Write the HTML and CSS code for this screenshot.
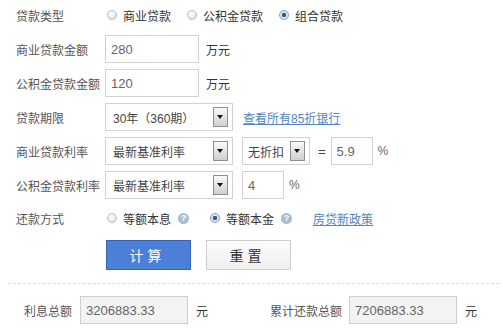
FILE: index.html
```html
<!DOCTYPE html>
<html lang="zh-CN">
<head>
  <meta charset="UTF-8" />
  <title>房贷计算器</title>
  <link rel="stylesheet" href="styles.css">
</head>
<body>
  <div class="calc">
    <div class="row row-type">
      <span class="label">贷款类型</span>
      <div class="radios">
        <span class="radio"><i class="dot"></i>商业贷款</span>
        <span class="radio"><i class="dot"></i>公积金贷款</span>
        <span class="radio"><i class="dot on"></i>组合贷款</span>
      </div>
    </div>

    <div class="row">
      <span class="label">商业贷款金额</span>
      <input class="field" type="text" value="280" />
      <span class="unit">万元</span>
    </div>

    <div class="row">
      <span class="label">公积金贷款金额</span>
      <input class="field" type="text" value="120" />
      <span class="unit">万元</span>
    </div>

    <div class="row">
      <span class="label">贷款期限</span>
      <div class="select wide"><span class="text">30年（360期）</span><span class="arrow"></span></div>
      <a class="link" href="#">查看所有85折银行</a>
    </div>

    <div class="row">
      <span class="label">商业贷款利率</span>
      <div class="select wide"><span class="text">最新基准利率</span><span class="arrow"></span></div>
      <div class="select small"><span class="text">无折扣</span><span class="arrow"></span></div>
      <span class="eq">=</span>
      <input class="field rate" type="text" value="5.9" />
      <span class="pct">%</span>
    </div>

    <div class="row">
      <span class="label">公积金贷款利率</span>
      <div class="select wide"><span class="text">最新基准利率</span><span class="arrow"></span></div>
      <input class="field rate" type="text" value="4" />
      <span class="pct">%</span>
    </div>

    <div class="row row-pay">
      <span class="label">还款方式</span>
      <div class="radios">
        <span class="radio"><i class="dot"></i>等额本息<i class="help">?</i></span>
        <span class="radio"><i class="dot on"></i>等额本金<i class="help">?</i></span>
        <a class="link policy" href="#">房贷新政策</a>
      </div>
    </div>

    <div class="buttons">
      <button class="btn calc-btn" type="button">计算</button>
      <button class="btn reset-btn" type="button">重置</button>
    </div>

    <div class="result">
      <span class="res-label">利息总额</span>
      <input class="field out" type="text" value="3206883.33" readonly />
      <span class="yuan">元</span>
      <span class="res-label total">累计还款总额</span>
      <input class="field out" type="text" value="7206883.33" readonly />
      <span class="yuan">元</span>
    </div>
  </div>
</body>
</html>
```

FILE: styles.css
```css
body {
  margin: 0;
  background-color: #fff;
  font-family: "Liberation Sans", "Noto Sans CJK SC", sans-serif;
  font-size: 12px;
  color: #555;
}
.calc {
  width: 503px;
  padding-top: 1px;
}
.row {
  display: flex;
  align-items: center;
  height: 28px;
  padding-left: 16px;
  margin-top: 6px;
}
.row-type {
  margin-top: 0;
}
.row-pay {
  margin-top: 5px;
}
.label {
  width: 89px;
  flex: none;
  color: #555;
}
.radios {
  display: flex;
  align-items: center;
  margin-left: 2px;
}
.radio {
  display: flex;
  align-items: center;
  color: #333;
  margin-right: 16px;
}
.row-pay .radio {
  margin-right: 21px;
}
.dot {
  width: 10px;
  height: 10px;
  border-radius: 50%;
  border: 1px solid #b9bec4;
  box-sizing: border-box;
  background: radial-gradient(circle at 40% 35%, #fff 0, #e9ebee 55%, #c9cdd2 100%);
  margin-right: 6px;
}
.dot.on {
  border-color: #8aa0b5;
  background: radial-gradient(circle, #2d4f72 0, #3c6690 35%, #dfe6ee 45%, #c7d1dc 100%);
}
.help {
  width: 11px;
  height: 11px;
  border-radius: 50%;
  background-color: #a9bccb;
  color: #fff;
  font-style: normal;
  font-size: 9px;
  font-weight: bold;
  line-height: 11px;
  text-align: center;
  margin-left: 7px;
}
.field {
  box-sizing: border-box;
  height: 28px;
  width: 94px;
  border: 1px solid #d2d2d2;
  padding: 0 5px;
  font-family: "Liberation Sans", sans-serif;
  font-size: 13px;
  color: #666;
  outline: none;
}
.unit {
  margin-left: 7px;
  color: #333;
}
.select {
  box-sizing: border-box;
  height: 28px;
  border: 1px solid #d2d2d2;
  display: flex;
  align-items: center;
  justify-content: space-between;
  padding: 0 4px 0 7px;
  color: #444;
}
.select.wide {
  width: 128px;
}
.select.small {
  width: 68px;
  margin-left: 9px;
  padding-left: 5px;
  padding-right: 4px;
  font-size: 12px;
}
.arrow {
  position: relative;
  width: 15px;
  height: 20px;
  box-sizing: border-box;
  border: 1px solid #8f8f8f;
  background: linear-gradient(#fafafa, #cfcfcf);
}
.arrow::after {
  content: "";
  position: absolute;
  left: 3px;
  top: 7px;
  border-left: 3.5px solid transparent;
  border-right: 3.5px solid transparent;
  border-top: 4px solid #111;
}
.link {
  color: #4f86bd;
  text-decoration: underline;
  margin-left: 10px;
}
.policy {
  margin-left: 0;
}
.eq {
  margin: 0 5px 0 8px;
  color: #444;
  font-size: 13px;
}
.field.rate {
  width: 42px;
}
.row .select.wide + .field.rate {
  margin-left: 9px;
}
.pct {
  margin-left: 5px;
  color: #666;
}
.buttons {
  display: flex;
  gap: 15px;
  padding-left: 106px;
  margin-top: 8px;
}
.btn {
  width: 85px;
  height: 30px;
  font-family: "Noto Sans CJK SC", sans-serif;
  font-size: 14px;
  letter-spacing: 4px;
  padding-left: 4px;
  cursor: pointer;
  border-radius: 0;
}
.calc-btn {
  background-color: #4b7fd8;
  border: 1px solid #3863b3;
  color: #fff;
}
.reset-btn {
  background: linear-gradient(#fcfcfc, #efefef);
  border: 1px solid #cfcfcf;
  color: #333;
}
.result {
  display: flex;
  align-items: center;
  margin: 13px 4px 0 8px;
  padding: 12px 0 0 16px;
  border-top: 1px dashed #dcdcdc;
}
.res-label {
  color: #555;
  margin-right: 8px;
}
.res-label.total {
  margin-left: 62px;
  margin-right: 7px;
}
.field.out {
  width: 108px;
  height: 28px;
  background-color: #f3f3f3;
  border-color: #cfcfcf;
}
.yuan {
  margin-left: 8px;
  color: #333;
}
```
